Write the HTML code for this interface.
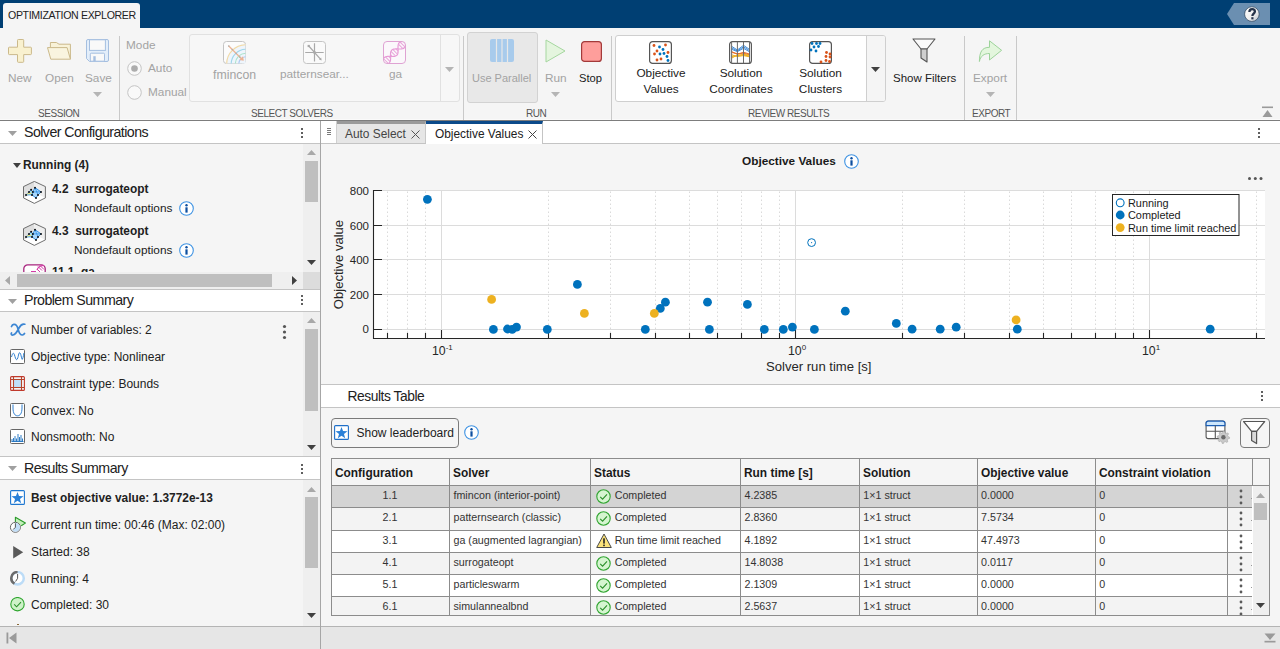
<!DOCTYPE html>
<html><head><meta charset="utf-8">
<style>
*{box-sizing:border-box}
html,body{margin:0;padding:0}
body{width:1280px;height:649px;overflow:hidden;position:relative;background:#f5f5f5;font-family:"Liberation Sans",sans-serif;color:#212121}
.a{position:absolute}
.t{position:absolute;white-space:nowrap;line-height:1}
.dis{color:#a3a3a3}
.sec{font-size:10px;color:#555;letter-spacing:-0.45px}
.lbl{font-size:11.8px}
.sep{position:absolute;width:1px;background:#c9c9c9;top:36px;height:84px}
.hdr{position:absolute;background:#fff;border-bottom:1px solid #c4c4c4}
.kb{position:absolute;width:3px}
.kb i{display:block;width:2.6px;height:2.6px;background:#5a5a5a;margin-bottom:1.6px;border-radius:0.5px}
.vs{position:absolute;background:#efefef}
.thumb{position:absolute;background:#bfbfbf}
.ps{position:absolute;font-size:12px;left:31px;line-height:1}
</style></head>
<body>
<!-- top bar -->
<div class="a" style="left:0;top:0;width:1280px;height:28px;background:#003f73"></div>
<div class="a" style="left:3px;top:3px;width:137px;height:25px;background:#f5f5f5;border-radius:3px 3px 0 0"></div>
<div class="t" style="left:8px;top:10px;font-size:10.6px;letter-spacing:-0.35px;color:#222">OPTIMIZATION EXPLORER</div>
<!-- help -->
<svg class="a" style="left:1226px;top:3px" width="46" height="23" viewBox="0 0 46 23">
<defs><linearGradient id="hg" x1="0" y1="0" x2="1" y2="1"><stop offset="0" stop-color="#ffffff"/><stop offset=".55" stop-color="#f0f0f0"/><stop offset="1" stop-color="#b9c2cc"/></linearGradient></defs>
<path d="M8 0H44V22H8L1 11Z" fill="#6b8fb1"/>
<circle cx="25.9" cy="11.1" r="7.3" fill="url(#hg)" stroke="#2f435a" stroke-width=".7"/>
<path d="M23.4 8.9C23.4 6.9 24.6 6.1 26.1 6.1C27.7 6.1 28.9 7.1 28.9 8.5C28.9 10.5 26.4 10.8 26.4 12.9" fill="none" stroke="#26334a" stroke-width="2.3"/>
<rect x="25.3" y="14.2" width="2.2" height="2.2" fill="#26334a"/>
</svg>

<!-- toolstrip -->
<div class="a" style="left:0;top:119px;width:1280px;height:1px;background:#fafafa"></div>
<div class="a" style="left:0;top:120px;width:1280px;height:1px;background:#7d7d7d"></div>

<!-- SESSION -->
<svg class="a" style="left:8px;top:39px" width="24" height="24" viewBox="0 0 24 24"><path d="M9.5 1.3Q9.5 .5 10.3 .5H14.9Q15.7 .5 15.7 1.3V8.2H22.6Q23.4 8.2 23.4 9V14.8Q23.4 15.6 22.6 15.6H15.7V22.5Q15.7 23.3 14.9 23.3H10.3Q9.5 23.3 9.5 22.5V15.6H1.3Q.5 15.6 .5 14.8V9Q.5 8.2 1.3 8.2H9.5Z" fill="#f9f1cf" stroke="#cbb98a" stroke-width="1"/></svg>
<svg class="a" style="left:47px;top:42px" width="25" height="19" viewBox="0 0 25 19"><path d="M3.4 5.6V.5H9.4L12 2.2H23.4V17.2" fill="#f8f2d8" stroke="#cbb98a" stroke-width="1" stroke-linejoin="round"/><path d="M.5 5.6H20.1L23.4 17.2H3.8Z" fill="#f9f4df" stroke="#cbb98a" stroke-width="1" stroke-linejoin="round"/></svg>
<svg class="a" style="left:86px;top:39px" width="24" height="24" viewBox="0 0 24 24"><path d="M2 .5H21Q22.5 .5 22.5 2V21Q22.5 22.5 21 22.5H3.5L.5 19.5V2Q.5 .5 2 .5Z" fill="#e3eefa" stroke="#a5bfe0" stroke-width="1"/><rect x="3.5" y=".8" width="15.9" height="10.6" fill="#f9f9f9" stroke="#a5bfe0" stroke-width="1"/><rect x="4.3" y="14.2" width="14.2" height="8" rx="1" fill="#f9f9f9" stroke="#a5bfe0" stroke-width="1"/><rect x="7.3" y="17.2" width="2.4" height="5" fill="#a5bfe0"/></svg>
<div class="t lbl dis" style="left:8px;top:73px">New</div>
<div class="t lbl dis" style="left:45px;top:73px">Open</div>
<div class="t lbl dis" style="left:85px;top:73px">Save</div>
<svg class="a" style="left:93px;top:92px" width="9" height="5"><path d="M0 0h9L4.5 5Z" fill="#b5b5b5"/></svg>
<div class="t sec" style="left:38px;top:109px">SESSION</div>
<div class="sep" style="left:119px"></div>

<!-- Mode -->
<div class="t lbl dis" style="left:126px;top:40px">Mode</div>
<svg class="a" style="left:127px;top:61px" width="15" height="15"><circle cx="7.5" cy="7.5" r="6.8" fill="#f9f9f9" stroke="#c4c4c4"/><circle cx="7.5" cy="7.5" r="3.3" fill="#acacac"/></svg>
<div class="t lbl dis" style="left:148px;top:63px">Auto</div>
<svg class="a" style="left:127px;top:85px" width="15" height="15"><circle cx="7.5" cy="7.5" r="6.8" fill="#f9f9f9" stroke="#c4c4c4"/></svg>
<div class="t lbl dis" style="left:148px;top:87px">Manual</div>

<!-- select solvers -->
<div class="a" style="left:189px;top:34px;width:271px;height:68px;background:#f7f7f7;border:1px solid #e1e1e1;border-radius:3px"></div>
<div class="a" style="left:440px;top:35px;width:1px;height:66px;background:#e1e1e1"></div>
<svg class="a" style="left:445px;top:67px" width="9" height="5"><path d="M0 0h9L4.5 5Z" fill="#b5b5b5"/></svg>
<svg class="a" style="left:223px;top:41px" width="23" height="23" viewBox="0 0 23 23">
<rect x=".5" y=".5" width="22" height="22" rx="3" fill="#fcfcfc" stroke="#c4c4c4"/>
<path d="M3 22.5A19.5 19.5 0 0 1 22.5 3V22.5Z" fill="#eef5fc"/>
<path d="M3.7 22.5A19.3 19.3 0 0 1 22.5 3.7" fill="none" stroke="#f4d9a0" stroke-width="1.1"/><path d="M8.2 22.5A14.8 14.8 0 0 1 22.5 8.2" fill="none" stroke="#9fd6ea" stroke-width="1.1"/><path d="M12.3 22.5A10.7 10.7 0 0 1 22.5 12.3" fill="none" stroke="#a8e2c8" stroke-width="1.1"/><path d="M15.8 22.5A7.2 7.2 0 0 1 22.5 15.8" fill="none" stroke="#a9c8f2" stroke-width="1.1"/>
<path d="M5.5 4.8L19 18.2" stroke="#edb393" stroke-width="1.3"/>
<path d="M20.8 19.8L20 15.3L16.3 19Z" fill="#edb393"/>
<g fill="#b0b0b0"><circle cx="5.7" cy="5" r=".8"/><circle cx="9.3" cy="8.6" r=".8"/><circle cx="13.2" cy="12.5" r=".8"/><circle cx="16.8" cy="16.1" r=".8"/></g>
</svg>
<svg class="a" style="left:303px;top:41px" width="23" height="23" viewBox="0 0 23 23"><rect x=".5" y=".5" width="22" height="22" rx="3" fill="#fafafa" stroke="#c4c4c4"/><path d="M11.5 2.2V20.5M2.2 11.5H20.7M5.8 5L17.9 18.6" stroke="#a9a9a9" stroke-width="1.2"/><rect x="4.6" y="3.9" width="2.2" height="2.2" fill="#a9a9a9"/><path d="M18.6 19.4L16 18.6L18.2 16.6Z" fill="#a9a9a9"/><circle cx="11.5" cy="11.5" r="1.4" fill="#a9a9a9"/></svg>
<svg class="a" style="left:383px;top:41px" width="23" height="23" viewBox="0 0 23 23">
<defs><clipPath id="gac"><rect x="1" y="1" width="21" height="21" rx="3"/></clipPath></defs>
<rect x=".5" y=".5" width="22" height="22" rx="3.5" fill="#fbf8fb" stroke="#dfa3d3" stroke-width="1"/>
<g clip-path="url(#gac)"><g transform="translate(11.3 11.7) rotate(-45)">
<path d="M-18.00 -2.10 L-17.50 -1.64 L-17.00 -1.15 L-16.50 -0.64 L-16.00 -0.11 L-15.50 0.43 L-15.00 0.95 L-14.50 1.45 L-14.00 1.92 L-13.50 2.35 L-13.00 2.73 L-12.50 3.04 L-12.00 3.29 L-11.50 3.47 L-11.00 3.57 L-10.50 3.60 L-10.00 3.54 L-9.50 3.41 L-9.00 3.20 L-8.50 2.92 L-8.00 2.58 L-7.50 2.18 L-7.00 1.74 L-6.50 1.25 L-6.00 0.74 L-5.50 0.21 L-5.00 -0.32 L-4.50 -0.85 L-4.00 -1.35 L-3.50 -1.83 L-3.00 -2.27 L-2.50 -2.66 L-2.00 -2.99 L-1.50 -3.25 L-1.00 -3.44 L-0.50 -3.56 L0.00 -3.60 L0.50 -3.56 L1.00 -3.44 L1.50 -3.25 L2.00 -2.99 L2.50 -2.66 L3.00 -2.27 L3.50 -1.83 L4.00 -1.35 L4.50 -0.85 L5.00 -0.32 L5.50 0.21 L6.00 0.74 L6.50 1.25 L7.00 1.74 L7.50 2.18 L8.00 2.58 L8.50 2.92 L9.00 3.20 L9.50 3.41 L10.00 3.54 L10.50 3.60 L11.00 3.57 L11.50 3.47 L12.00 3.29 L12.50 3.04 L13.00 2.73 L13.50 2.35 L14.00 1.92 L14.50 1.45 L15.00 0.95 L15.50 0.43 L16.00 -0.11 L16.50 -0.64 L17.00 -1.15 L17.50 -1.64 L18.00 -2.10M-18.00 2.10 L-17.50 1.64 L-17.00 1.15 L-16.50 0.64 L-16.00 0.11 L-15.50 -0.43 L-15.00 -0.95 L-14.50 -1.45 L-14.00 -1.92 L-13.50 -2.35 L-13.00 -2.73 L-12.50 -3.04 L-12.00 -3.29 L-11.50 -3.47 L-11.00 -3.57 L-10.50 -3.60 L-10.00 -3.54 L-9.50 -3.41 L-9.00 -3.20 L-8.50 -2.92 L-8.00 -2.58 L-7.50 -2.18 L-7.00 -1.74 L-6.50 -1.25 L-6.00 -0.74 L-5.50 -0.21 L-5.00 0.32 L-4.50 0.85 L-4.00 1.35 L-3.50 1.83 L-3.00 2.27 L-2.50 2.66 L-2.00 2.99 L-1.50 3.25 L-1.00 3.44 L-0.50 3.56 L0.00 3.60 L0.50 3.56 L1.00 3.44 L1.50 3.25 L2.00 2.99 L2.50 2.66 L3.00 2.27 L3.50 1.83 L4.00 1.35 L4.50 0.85 L5.00 0.32 L5.50 -0.21 L6.00 -0.74 L6.50 -1.25 L7.00 -1.74 L7.50 -2.18 L8.00 -2.58 L8.50 -2.92 L9.00 -3.20 L9.50 -3.41 L10.00 -3.54 L10.50 -3.60 L11.00 -3.57 L11.50 -3.47 L12.00 -3.29 L12.50 -3.04 L13.00 -2.73 L13.50 -2.35 L14.00 -1.92 L14.50 -1.45 L15.00 -0.95 L15.50 -0.43 L16.00 0.11 L16.50 0.64 L17.00 1.15 L17.50 1.64 L18.00 2.10" fill="none" stroke="#e79ad6" stroke-width="1.2"/>
<path d="M-14.40 -1.55V1.55M-11.80 -3.37V3.37M-9.20 -3.29V3.29M-6.60 -1.35V1.35M-4.00 -1.35V1.35M-1.40 -3.29V3.29M1.20 -3.37V3.37M3.80 -1.55V1.55M9.00 -3.20V3.20M11.60 -3.44V3.44M14.20 -1.74V1.74" stroke="#e8a6da" stroke-width="1"/>
</g></g>
</svg>
<div class="t lbl dis" style="left:213px;top:68.5px;font-size:12.3px">fmincon</div>
<div class="t lbl dis" style="left:280px;top:68.5px">patternsear...</div>
<div class="t lbl dis" style="left:389px;top:68.5px">ga</div>
<div class="t sec" style="left:251px;top:109px">SELECT SOLVERS</div>
<div class="sep" style="left:463px"></div>

<!-- RUN -->
<div class="a" style="left:467px;top:32px;width:71px;height:71px;background:#e8e8e8;border:1px solid #d2d2d2;border-radius:3px"></div>
<svg class="a" style="left:490px;top:39px" width="24" height="23" viewBox="0 0 24 23">
<rect x="0" y="0" width="24" height="23" rx="2" fill="#a8cbec"/>
<path d="M6.5 0v23M12 0v23M17.5 0v23" stroke="#e8e8e8" stroke-width="1.2"/>
</svg>
<svg class="a" style="left:545px;top:39px" width="21" height="24" viewBox="0 0 21 24">
<path d="M1 1L20 12L1 23Z" fill="#e4f5de" stroke="#a5d79f" stroke-width="1" stroke-linejoin="round"/>
</svg>
<svg class="a" style="left:581px;top:41px" width="21" height="21" viewBox="0 0 21 21">
<rect x=".6" y=".6" width="19.8" height="19.8" rx="3" fill="#fe9e9b" stroke="#a33a3a" stroke-width="1.2"/>
</svg>
<div class="t lbl dis" style="left:472px;top:73px;font-size:11px">Use Parallel</div>
<div class="t lbl dis" style="left:545px;top:73px">Run</div>
<svg class="a" style="left:551px;top:92px" width="9" height="5"><path d="M0 0h9L4.5 5Z" fill="#b5b5b5"/></svg>
<div class="t lbl" style="left:579px;top:73px;font-size:11.2px;color:#1a1a1a">Stop</div>
<div class="t sec" style="left:526px;top:109px">RUN</div>
<div class="sep" style="left:611px"></div>

<!-- REVIEW RESULTS -->
<div class="a" style="left:615px;top:35px;width:271px;height:67px;background:#fff;border:1px solid #cfcfcf;border-radius:3px"></div>
<div class="a" style="left:866px;top:36px;width:19px;height:65px;background:#f5f5f5;border-left:1px solid #cfcfcf;border-radius:0 2px 2px 0"></div>
<svg class="a" style="left:871px;top:67px" width="9" height="5"><path d="M0 0h9L4.5 5Z" fill="#404040"/></svg>
<svg class="a" style="left:649px;top:41px" width="23" height="23" viewBox="0 0 23 23">
<rect x=".6" y=".6" width="21.8" height="21.8" rx="3" fill="#fff" stroke="#555" stroke-width="1.2"/>
<g fill="#d95319"><circle cx="5" cy="4.5" r="1.4"/><circle cx="16.5" cy="4" r="1.4"/><circle cx="8" cy="10" r="1.4"/><circle cx="5.5" cy="13" r="1.4"/><circle cx="19" cy="11.5" r="1.4"/><circle cx="12" cy="18" r="1.4"/><circle cx="8" cy="19" r="1.4"/></g>
<g fill="#0072bd"><circle cx="10.5" cy="6" r="1.4"/><circle cx="14" cy="8.5" r="1.4"/><circle cx="11" cy="13" r="1.4"/><circle cx="15" cy="12.5" r="1.4"/><circle cx="18" cy="15.5" r="1.4"/><circle cx="19" cy="19.5" r="1.4"/></g>
</svg>
<svg class="a" style="left:729px;top:41px" width="23" height="23" viewBox="0 0 23 23">
<rect x=".6" y=".6" width="21.8" height="21.8" rx="3" fill="#fff" stroke="#5a5a5a" stroke-width="1.2"/>
<path d="M2.6 5.3 L8.4 9 L14.5 4.3 L20.5 8.4M2.6 6.8 L8.4 10 L14.5 5.8 L20.5 9.6M2.6 8.3 L8.4 10.6 L14.5 7.3 L20.5 10.8" fill="none" stroke="#2b7fd4" stroke-width=".9"/>
<path d="M2.6 10.5 L8.4 13.4 L14.5 11.3 L20.5 13M2.6 11.5 L8.4 12.6 L14.5 12.2 L20.5 13.8" fill="none" stroke="#e8702a" stroke-width="1"/>
<path d="M2.6 17.2 L8.4 14 L14.5 14 L20.5 15M2.6 15.5 L8.4 14.8 L14.5 13.3 L20.5 14.2M2.6 13.8 L8.4 15.5 L14.5 14.6 L20.5 15.8" fill="none" stroke="#f0b020" stroke-width="1"/>
<path d="M2.6 .8v21.4M8.4 .8v21.4M14.5 .8v21.4M20.5 .8v21.4" stroke="#6a6a6a" stroke-width="1"/>
</svg>
<svg class="a" style="left:809px;top:41px" width="23" height="23" viewBox="0 0 23 23">
<rect x=".6" y=".6" width="21.8" height="21.8" rx="3" fill="#fff" stroke="#555" stroke-width="1.2"/>
<g fill="#0072bd"><circle cx="3" cy="2.5" r="1.4"/><circle cx="7.5" cy="2.5" r="1.4"/><circle cx="11" cy="2.5" r="1.4"/><circle cx="5" cy="6" r="1.4"/><circle cx="9.5" cy="5.5" r="1.4"/><circle cx="2" cy="9" r="1.4"/><circle cx="7" cy="10" r="1.4"/></g>
<g fill="#d95319"><circle cx="17.5" cy="11.5" r="1.4"/><circle cx="21" cy="13" r="1.4"/><circle cx="17" cy="15.5" r="1.4"/><circle cx="21" cy="16" r="1.4"/><circle cx="17" cy="19.5" r="1.4"/><circle cx="12" cy="21" r="1.4"/><circle cx="20.5" cy="20.5" r="1.4"/></g>
</svg>
<div class="t lbl" style="left:636px;top:65px;line-height:16px;text-align:center;width:50px">Objective<br>Values</div>
<div class="t lbl" style="left:709px;top:65px;line-height:16px;text-align:center;width:64px">Solution<br>Coordinates</div>
<div class="t lbl" style="left:797px;top:65px;line-height:16px;text-align:center;width:47px">Solution<br>Clusters</div>
<div class="t sec" style="left:748px;top:109px">REVIEW RESULTS</div>

<!-- Show Filters -->
<svg class="a" style="left:912px;top:38px" width="24" height="25" viewBox="0 0 24 25">
<path d="M1 1H23L15 11H9Z" fill="#fafafa" stroke="#555" stroke-width="1.1" stroke-linejoin="round"/>
<path d="M9 11H15V24L9 20Z" fill="#cfcfcf" stroke="#555" stroke-width="1.1" stroke-linejoin="round"/>
</svg>
<div class="t lbl" style="left:893px;top:73px;font-size:11.5px">Show Filters</div>
<div class="sep" style="left:964px"></div>

<!-- EXPORT -->
<svg class="a" style="left:978px;top:40px" width="25" height="22" viewBox="0 0 25 22">
<path d="M11.5 7.3V0.8L23.6 10.3L11.5 20V13.5C6 13.5 2.5 16 1.4 21.5C1.4 12 4 7.3 11.5 7.3Z" fill="#e3f6dd" stroke="#9dd39a" stroke-width="1" stroke-linejoin="miter"/>
</svg>
<div class="t lbl dis" style="left:973px;top:73px">Export</div>
<svg class="a" style="left:986px;top:92px" width="9" height="5"><path d="M0 0h9L4.5 5Z" fill="#b5b5b5"/></svg>
<div class="t sec" style="left:972px;top:109px">EXPORT</div>
<div class="sep" style="left:1016px"></div>
<!-- collapse -->
<svg class="a" style="left:1262px;top:106px" width="12" height="12" viewBox="0 0 12 12">
<rect x="0" y="0.5" width="11" height="1.6" fill="#9a9a9a"/><path d="M0.5 11H10.5L5.5 4Z" fill="#9a9a9a"/>
</svg>

<!--LEFT-->
<div class="a" style="left:320px;top:121px;width:1px;height:528px;background:#a6a6a6"></div>
<!-- Solver Configurations -->
<div class="hdr" style="left:0;top:121px;width:320px;height:23px"></div>
<svg class="a" style="left:8px;top:131px" width="9" height="5"><path d="M0 0h9L4.5 5Z" fill="#a0a0a0"/></svg>
<div class="t" style="left:24px;top:125.3px;font-size:14.2px;letter-spacing:-0.55px">Solver Configurations</div>
<svg class="a" style="left:301px;top:128px" width="2" height="10"><rect y="0" width="2" height="2" fill="#5f5f5f"/><rect y="4" width="2" height="2" fill="#5f5f5f"/><rect y="8" width="2" height="2" fill="#5f5f5f"/></svg>
<div class="vs" style="left:303px;top:144px;width:17px;height:128px"></div>
<svg class="a" style="left:307px;top:150px" width="9" height="5"><path d="M0 5h9L4.5 0Z" fill="#a8a8a8"/></svg>
<div class="thumb" style="left:305px;top:161px;width:13px;height:41px"></div>
<svg class="a" style="left:307px;top:260px" width="9" height="5"><path d="M0 0h9L4.5 5Z" fill="#404040"/></svg>
<svg class="a" style="left:13px;top:163px" width="8" height="5"><path d="M0 0h8L4 5Z" fill="#404040"/></svg>
<div class="t" style="left:23px;top:160px;font-size:11.9px;font-weight:bold">Running (4)</div>
<svg class="a" style="left:23px;top:181px" width="23" height="23" viewBox="0 0 23 23">
<path d="M.5 5.6L11.3 .4V11.5L.5 16.9Z" fill="#dedede"/><path d="M11.3 .4L22.4 5.6V16.9L11.3 11.5Z" fill="#eeeeee"/><path d="M.5 16.9L11.3 11.5L22.4 16.9L11.3 22.4Z" fill="#fff"/>
<path d="M11.3 .4L22.4 5.6V16.9L11.3 22.4L.5 16.9V5.6Z" fill="none" stroke="#5f5f5f" stroke-width=".9"/>
<path d="M12 6.7L18 10.9L15 13.9L13 16.9L9 13.9L9.9 10.9Z" fill="#a9d6fa" stroke="#1e88e5" stroke-width=".9"/>
<path d="M12 6.7L15 13.9M9.9 10.9L18 10.9" stroke="#1e88e5" stroke-width=".7"/>
<path d="M3 13.9L6 10.9L8.1 8.8L9.9 10.9L9 13.9Z" fill="#9fd8f0" stroke="#1e88e5" stroke-width=".7"/>
<path d="M4 13L8.5 12.3" stroke="#f5e36a" stroke-width="1.1"/>
<g fill="#111"><circle cx="3" cy="13.9" r="1"/><circle cx="6" cy="10.9" r="1"/><circle cx="8.1" cy="8.8" r="1"/><circle cx="12" cy="6.7" r="1"/><circle cx="18" cy="10.9" r="1"/><circle cx="15" cy="13.9" r="1"/><circle cx="13" cy="16.9" r="1"/><circle cx="9" cy="13.9" r="1"/><circle cx="9.9" cy="10.9" r="1"/></g>
</svg>
<div class="t" style="left:52px;top:183.5px;font-size:11.9px;font-weight:bold">4.2&nbsp; surrogateopt</div>
<div class="t" style="left:74px;top:203px;font-size:11.8px">Nondefault options</div>
<svg class="a" style="left:179px;top:201px" width="15" height="15" viewBox="0 0 15 15"><circle cx="7.5" cy="7.5" r="6.8" fill="#fff" stroke="#3f93e3" stroke-width="1.1"/><circle cx="7.5" cy="4.2" r="1.2" fill="#0d4fa0"/><rect x="6.4" y="6.3" width="2.2" height="5.3" fill="#0d4fa0"/></svg>
<svg class="a" style="left:23px;top:223px" width="23" height="23" viewBox="0 0 23 23">
<path d="M.5 5.6L11.3 .4V11.5L.5 16.9Z" fill="#dedede"/><path d="M11.3 .4L22.4 5.6V16.9L11.3 11.5Z" fill="#eeeeee"/><path d="M.5 16.9L11.3 11.5L22.4 16.9L11.3 22.4Z" fill="#fff"/>
<path d="M11.3 .4L22.4 5.6V16.9L11.3 22.4L.5 16.9V5.6Z" fill="none" stroke="#5f5f5f" stroke-width=".9"/>
<path d="M12 6.7L18 10.9L15 13.9L13 16.9L9 13.9L9.9 10.9Z" fill="#a9d6fa" stroke="#1e88e5" stroke-width=".9"/>
<path d="M12 6.7L15 13.9M9.9 10.9L18 10.9" stroke="#1e88e5" stroke-width=".7"/>
<path d="M3 13.9L6 10.9L8.1 8.8L9.9 10.9L9 13.9Z" fill="#9fd8f0" stroke="#1e88e5" stroke-width=".7"/>
<path d="M4 13L8.5 12.3" stroke="#f5e36a" stroke-width="1.1"/>
<g fill="#111"><circle cx="3" cy="13.9" r="1"/><circle cx="6" cy="10.9" r="1"/><circle cx="8.1" cy="8.8" r="1"/><circle cx="12" cy="6.7" r="1"/><circle cx="18" cy="10.9" r="1"/><circle cx="15" cy="13.9" r="1"/><circle cx="13" cy="16.9" r="1"/><circle cx="9" cy="13.9" r="1"/><circle cx="9.9" cy="10.9" r="1"/></g>
</svg>
<div class="t" style="left:52px;top:226px;font-size:11.9px;font-weight:bold">4.3&nbsp; surrogateopt</div>
<div class="t" style="left:74px;top:245px;font-size:11.8px">Nondefault options</div>
<svg class="a" style="left:179px;top:243px" width="15" height="15" viewBox="0 0 15 15"><circle cx="7.5" cy="7.5" r="6.8" fill="#fff" stroke="#3f93e3" stroke-width="1.1"/><circle cx="7.5" cy="4.2" r="1.2" fill="#0d4fa0"/><rect x="6.4" y="6.3" width="2.2" height="5.3" fill="#0d4fa0"/></svg>
<div class="a" style="left:0;top:262px;width:303px;height:10px;overflow:hidden">
<svg class="a" style="left:23px;top:2px" width="23" height="23" viewBox="0 0 23 23"><rect x=".8" y=".8" width="21.4" height="21.4" rx="4" fill="#fff" stroke="#a8247e" stroke-width="1.3"/><path d="M8 7.5h5M14 6C15 3 18 1.5 21 1.5" fill="none" stroke="#d43aa6" stroke-width="1.2"/><path d="M15 2.5L19 6.5M17 1.5L21 5.5M14 5L17 8" stroke="#d43aa6" stroke-width="1"/></svg>
<div class="t" style="left:52px;top:5px;font-size:11.9px;font-weight:bold">11.1&nbsp; ga</div>
</div>
<!-- hscroll -->
<div class="a" style="left:0;top:272px;width:303px;height:17px;background:#efefef"></div>
<svg class="a" style="left:5px;top:276px" width="5" height="9"><path d="M5 0v9L0 4.5Z" fill="#a8a8a8"/></svg>
<div class="thumb" style="left:17px;top:274px;width:255px;height:13px"></div>
<svg class="a" style="left:292px;top:276px" width="5" height="9"><path d="M0 0v9L5 4.5Z" fill="#404040"/></svg>
<div class="a" style="left:303px;top:272px;width:17px;height:17px;background:#dcdcdc"></div>
<div class="a" style="left:0;top:289px;width:320px;height:1px;background:#c4c4c4"></div>

<!-- Problem Summary -->
<div class="hdr" style="left:0;top:290px;width:320px;height:22px"></div>
<svg class="a" style="left:8px;top:299px" width="9" height="5"><path d="M0 0h9L4.5 5Z" fill="#a0a0a0"/></svg>
<div class="t" style="left:24px;top:293.3px;font-size:14.2px;letter-spacing:-0.55px">Problem Summary</div>
<svg class="a" style="left:301px;top:295px" width="2" height="10"><rect y="0" width="2" height="2" fill="#5f5f5f"/><rect y="4" width="2" height="2" fill="#5f5f5f"/><rect y="8" width="2" height="2" fill="#5f5f5f"/></svg>
<div class="vs" style="left:303px;top:312px;width:17px;height:144px"></div>
<svg class="a" style="left:307px;top:318px" width="9" height="5"><path d="M0 5h9L4.5 0Z" fill="#a8a8a8"/></svg>
<div class="thumb" style="left:305px;top:329px;width:13px;height:82px"></div>
<svg class="a" style="left:307px;top:445px" width="9" height="5"><path d="M0 0h9L4.5 5Z" fill="#404040"/></svg>
<svg class="a" style="left:282px;top:324px" width="5" height="16"><circle cx="2.5" cy="2.5" r="1.6" fill="#555"/><circle cx="2.5" cy="8" r="1.6" fill="#555"/><circle cx="2.5" cy="13.5" r="1.6" fill="#555"/></svg>
<svg class="a" style="left:10px;top:323px" width="16" height="13" viewBox="0 0 16 13"><path d="M1.5 3.5C2.5 1 5 .8 6.5 2.5S8.5 9 10 10.8S13.5 12.3 14.5 10.5M14.8 1.2C12.5 .5 10.5 2 9 5S5.5 11.5 3 12C1.5 12.2 .8 11 1.5 10" fill="none" stroke="#3c86d3" stroke-width="1.7" stroke-linecap="round"/></svg>
<div class="ps" style="top:324px">Number of variables: 2</div>
<svg class="a" style="left:10px;top:349px" width="15" height="15" viewBox="0 0 15 15"><rect x=".5" y=".5" width="14" height="14" rx="1" fill="#fff" stroke="#666"/><path d="M1.5 8C2.5 4 3.5 3 4.5 6S6 12 7.3 10S8.5 2.5 10 4S11.5 12 12.5 10S13.5 5 14 4" fill="none" stroke="#2f7fd0" stroke-width="1"/></svg>
<div class="ps" style="top:351px">Objective type: Nonlinear</div>
<svg class="a" style="left:10px;top:376px" width="15" height="15" viewBox="0 0 15 15"><rect x="3.5" y="3.5" width="8" height="8" fill="#bfe0f8"/><path d="M1 3.5h13M1 11.5h13M3.5 1v13M11.5 1v13" stroke="#b5452a" stroke-width="1.1"/><rect x=".6" y=".6" width="13.8" height="13.8" rx="1" fill="none" stroke="#c0392b" stroke-width="1.1"/></svg>
<div class="ps" style="top:378px">Constraint type: Bounds</div>
<svg class="a" style="left:10px;top:403px" width="15" height="15" viewBox="0 0 15 15"><rect x=".5" y=".5" width="14" height="14" rx="1" fill="#fff" stroke="#666"/><path d="M3 1.5V5C3 10.5 5 12.8 7.5 12.8S12 10.5 12 5V1.5" fill="none" stroke="#2f7fd0" stroke-width="1"/></svg>
<div class="ps" style="top:405px">Convex: No</div>
<svg class="a" style="left:10px;top:429px" width="15" height="15" viewBox="0 0 15 15"><rect x=".5" y=".5" width="14" height="14" rx="1" fill="#fff" stroke="#666"/><path d="M2 12.5V10M3.5 12.5V9M5 12.5V7M6.5 12.5V9.5M8 12.5V5M9.5 12.5V8M11 12.5V6M12.5 12.5V9.5M1.5 12.5h12" fill="none" stroke="#1a6fc0" stroke-width=".9"/></svg>
<div class="ps" style="top:431px">Nonsmooth: No</div>
<div class="a" style="left:0;top:456px;width:320px;height:1px;background:#c4c4c4"></div>

<!-- Results Summary -->
<div class="hdr" style="left:0;top:457px;width:320px;height:23px"></div>
<svg class="a" style="left:8px;top:466px" width="9" height="5"><path d="M0 0h9L4.5 5Z" fill="#a0a0a0"/></svg>
<div class="t" style="left:24px;top:460.8px;font-size:14.2px;letter-spacing:-0.55px">Results Summary</div>
<svg class="a" style="left:301px;top:464px" width="2" height="10"><rect y="0" width="2" height="2" fill="#5f5f5f"/><rect y="4" width="2" height="2" fill="#5f5f5f"/><rect y="8" width="2" height="2" fill="#5f5f5f"/></svg>
<div class="vs" style="left:303px;top:480px;width:17px;height:146px"></div>
<svg class="a" style="left:307px;top:487px" width="9" height="5"><path d="M0 5h9L4.5 0Z" fill="#a8a8a8"/></svg>
<div class="thumb" style="left:305px;top:497px;width:13px;height:71px"></div>
<svg class="a" style="left:307px;top:613px" width="9" height="5"><path d="M0 0h9L4.5 5Z" fill="#404040"/></svg>
<svg class="a" style="left:10px;top:490px" width="15" height="15" viewBox="0 0 15 15"><rect x=".6" y=".6" width="13.8" height="13.8" rx="1" fill="#fff" stroke="#1f77d0" stroke-width="1.1"/><path d="M7.50 1.90 L9.03 6.10 L13.49 6.25 L9.97 9.00 L11.20 13.30 L7.50 10.80 L3.80 13.30 L5.03 9.00 L1.51 6.25 L5.97 6.10Z" fill="#2a80d8"/></svg>
<div class="ps" style="top:492.5px;font-weight:bold;font-size:11.9px">Best objective value: 1.3772e-13</div>
<svg class="a" style="left:9px;top:516px" width="18" height="18" viewBox="0 0 18 18"><path d="M6.4 8V1.3L16.4 7.1L12.2 9.8" fill="#c4f0bb" stroke="#2a9a2a" stroke-width="1.1" stroke-linejoin="round"/><circle cx="6.4" cy="11.3" r="5" fill="#fff" stroke="#666" stroke-width="1"/><path d="M6.4 6.8A4.5 4.5 0 1 1 3.4 14.6L6.4 11.3Z" fill="#c2def7"/><path d="M6.4 7.3v4L4.2 13.5" fill="none" stroke="#444" stroke-width=".9"/></svg>
<div class="ps" style="top:519px">Current run time: 00:46 (Max: 02:00)</div>
<svg class="a" style="left:13px;top:546px" width="11" height="13" viewBox="0 0 11 13"><path d="M.2 0L10.2 6.3L.2 12.6Z" fill="#5a5a5a"/></svg>
<div class="ps" style="top:546px">Started: 38</div>
<svg class="a" style="left:10px;top:571px" width="16" height="16" viewBox="0 0 16 16"><circle cx="7.6" cy="7.3" r="6.2" fill="#fff" stroke="#bcdcf7" stroke-width="2.5"/><path d="M7.6 1.1A6.2 6.2 0 0 0 4.5 12.7" fill="none" stroke="#6b6b6b" stroke-width="2.5"/><path d="M7.6 3v4.3L5.6 10.5" fill="none" stroke="#444" stroke-width=".9"/></svg>
<div class="ps" style="top:573px">Running: 4</div>
<svg class="a" style="left:10px;top:597px" width="15" height="15" viewBox="0 0 15 15"><circle cx="7.5" cy="7.2" r="6.7" fill="#cdf2c8" stroke="#2ea52e" stroke-width="1.1"/><path d="M4.2 7.4L6.6 9.8L11 5.2" fill="none" stroke="#2a8f2a" stroke-width="1.1"/></svg>
<div class="ps" style="top:599px">Completed: 30</div>
<div class="a" style="left:17px;top:624px;width:2px;height:1px;background:#8a6a3a"></div>

<!--RIGHT-->
<!-- tab row -->
<div class="a" style="left:321px;top:121px;width:959px;height:23px;background:#fff;border-bottom:1px solid #c4c4c4"></div>
<svg class="a" style="left:327px;top:128px" width="4" height="8"><path d="M0 .5h4M0 2.5h4M0 4.5h4M0 6.5h4" stroke="#7a7a7a" stroke-width="1"/></svg>
<div class="a" style="left:336px;top:121px;width:1px;height:22px;background:#d0d0d0"></div>
<div class="a" style="left:337px;top:121px;width:89px;height:22px;background:#e6e6e6;border-top:3px solid #9a9a9a;border-right:1px solid #c8c8c8"></div>
<div class="t" style="left:345px;top:129px;font-size:11.9px;color:#444">Auto Select</div>
<svg class="a" style="left:411px;top:130px" width="9" height="9"><path d="M.5 .5l8 8M8.5 .5l-8 8" stroke="#555" stroke-width="1"/></svg>
<div class="a" style="left:426px;top:121px;width:117px;height:23px;background:#fff;border-top:3px solid #0b4a8a;border-right:1px solid #c4c4c4"></div>
<div class="t" style="left:435px;top:129px;font-size:11.9px;color:#212121">Objective Values</div>
<svg class="a" style="left:528px;top:130px" width="9" height="9"><path d="M.5 .5l8 8M8.5 .5l-8 8" stroke="#444" stroke-width="1"/></svg>
<svg class="a" style="left:1258px;top:128px" width="2" height="10"><rect y="0" width="2" height="2" fill="#5f5f5f"/><rect y="4" width="2" height="2" fill="#5f5f5f"/><rect y="8" width="2" height="2" fill="#5f5f5f"/></svg>

<!-- chart panel -->
<div class="a" style="left:321px;top:144px;width:959px;height:241px;background:#f5f5f5;border-bottom:1px solid #c4c4c4"></div>
<svg class="a" style="left:321px;top:144px" width="959" height="240" viewBox="321 144 959 240">
<rect x="373.5" y="190.0" width="891.5" height="148.0" fill="#fff"/>
<path d="M387.5 191.5V338.5M407.5 191.5V338.5M425.5 191.5V338.5M548.5 191.5V338.5M610.5 191.5V338.5M655.5 191.5V338.5M689.5 191.5V338.5M717.5 191.5V338.5M741.5 191.5V338.5M761.5 191.5V338.5M779.5 191.5V338.5M902.5 191.5V338.5M964.5 191.5V338.5M1009.5 191.5V338.5M1043.5 191.5V338.5M1071.5 191.5V338.5M1095.5 191.5V338.5M1115.5 191.5V338.5M1133.5 191.5V338.5M1256.5 191.5V338.5" stroke="#dadada" stroke-width="1" stroke-dasharray="1.5 2.5"/>
<path d="M441.5 190.5V338.5M795.5 190.5V338.5M1149.5 190.5V338.5M373.5 329.5H1265.0M373.5 294.5H1265.0M373.5 259.5H1265.0M373.5 225.5H1265.0M373.5 190.5H1265.0" stroke="#dcdcdc" stroke-width="1"/>
<path d="M373.5 190.0V338.5H1265.0" fill="none" stroke="#262626" stroke-width="1.1"/>
<path d="M373.5 329.5h8.5M373.5 294.5h8.5M373.5 259.5h8.5M373.5 225.5h8.5M373.5 190.5h8.5M441.5 338.5v-8.5M795.5 338.5v-8.5M1149.5 338.5v-8.5M387.5 338.5v-5.5M407.5 338.5v-5.5M425.5 338.5v-5.5M548.5 338.5v-5.5M610.5 338.5v-5.5M655.5 338.5v-5.5M689.5 338.5v-5.5M717.5 338.5v-5.5M741.5 338.5v-5.5M761.5 338.5v-5.5M779.5 338.5v-5.5M902.5 338.5v-5.5M964.5 338.5v-5.5M1009.5 338.5v-5.5M1043.5 338.5v-5.5M1071.5 338.5v-5.5M1095.5 338.5v-5.5M1115.5 338.5v-5.5M1133.5 338.5v-5.5M1256.5 338.5v-5.5" stroke="#262626" stroke-width="1.1"/>
<g fill="#0072bd"><circle cx="427.4" cy="199.3" r="4.4"/><circle cx="493.4" cy="329.4" r="4.4"/><circle cx="507.5" cy="329" r="4.4"/><circle cx="512.2" cy="329.4" r="4.4"/><circle cx="516.5" cy="327.1" r="4.4"/><circle cx="547.3" cy="329.4" r="4.4"/><circle cx="577.4" cy="284.4" r="4.4"/><circle cx="645.3" cy="329.4" r="4.4"/><circle cx="660.3" cy="308.4" r="4.4"/><circle cx="665.4" cy="302.2" r="4.4"/><circle cx="707.5" cy="302.2" r="4.4"/><circle cx="709.4" cy="329.4" r="4.4"/><circle cx="747.4" cy="304.4" r="4.4"/><circle cx="764.3" cy="329.4" r="4.4"/><circle cx="783.3" cy="329.4" r="4.4"/><circle cx="792.4" cy="327.1" r="4.4"/><circle cx="814.4" cy="329.4" r="4.4"/><circle cx="845.3" cy="311.2" r="4.4"/><circle cx="896.3" cy="323.4" r="4.4"/><circle cx="912.1" cy="329.2" r="4.4"/><circle cx="940.2" cy="329.2" r="4.4"/><circle cx="956.2" cy="327.2" r="4.4"/><circle cx="1017.3" cy="329.2" r="4.4"/><circle cx="1210.2" cy="329.2" r="4.4"/></g>
<g fill="#edb120"><circle cx="491.6" cy="299.4" r="4.4"/><circle cx="584.4" cy="313.4" r="4.4"/><circle cx="654.3" cy="313.4" r="4.4"/><circle cx="1016.1" cy="319.9" r="4.4"/></g>
<circle cx="811.6" cy="242.6" r="3.9" fill="#fff" stroke="#0072bd" stroke-width="1"/><circle cx="811.6" cy="242.6" r=".6" fill="#0072bd"/>
<rect x="1112.5" y="194.5" width="126.5" height="41" fill="#fff" stroke="#262626" stroke-width="1"/>
<circle cx="1120.2" cy="202.8" r="3.9" fill="#fff" stroke="#0072bd" stroke-width="1.1"/>
<circle cx="1120.2" cy="215" r="4.4" fill="#0072bd"/>
<circle cx="1120.2" cy="227.6" r="4.4" fill="#edb120"/>
</svg>

<div class="t" style="left:742px;top:155.5px;font-size:11.8px;font-weight:bold;color:#1a1a1a">Objective Values</div>
<svg class="a" style="left:844px;top:154px" width="15" height="15" viewBox="0 0 15 15"><circle cx="7.5" cy="7.5" r="6.8" fill="#fff" stroke="#3f93e3" stroke-width="1.1"/><circle cx="7.5" cy="4.2" r="1.2" fill="#0d4fa0"/><rect x="6.4" y="6.3" width="2.2" height="5.3" fill="#0d4fa0"/></svg>
<svg class="a" style="left:1247px;top:176px" width="16" height="5"><circle cx="2.5" cy="2.5" r="1.5" fill="#555"/><circle cx="8.3" cy="2.5" r="1.5" fill="#555"/><circle cx="14" cy="2.5" r="1.5" fill="#555"/></svg>
<div class="t" style="left:340px;top:186px;width:29px;text-align:right;font-size:11.5px;color:#262626">800</div>
<div class="t" style="left:340px;top:220.5px;width:29px;text-align:right;font-size:11.5px;color:#262626">600</div>
<div class="t" style="left:340px;top:255px;width:29px;text-align:right;font-size:11.5px;color:#262626">400</div>
<div class="t" style="left:340px;top:289.5px;width:29px;text-align:right;font-size:11.5px;color:#262626">200</div>
<div class="t" style="left:340px;top:324px;width:29px;text-align:right;font-size:11.5px;color:#262626">0</div>
<div class="t" style="left:281px;top:257.7px;width:115px;text-align:center;font-size:13.05px;color:#262626;transform:rotate(-90deg)">Objective value</div>
<div class="t" style="left:432px;top:345px;font-size:12.3px;color:#262626">10<span style="font-size:8px;position:relative;top:-5.5px;">-1</span></div>
<div class="t" style="left:788px;top:345px;font-size:12.3px;color:#262626">10<span style="font-size:8px;position:relative;top:-5.5px;">0</span></div>
<div class="t" style="left:1142px;top:345px;font-size:12.3px;color:#262626">10<span style="font-size:8px;position:relative;top:-5.5px;">1</span></div>
<div class="t" style="left:766px;top:360.4px;font-size:13.1px;color:#262626">Solver run time [s]</div>
<div class="t" style="left:1128px;top:197.5px;font-size:10.9px;color:#1a1a1a">Running</div>
<div class="t" style="left:1128px;top:209.7px;font-size:10.9px;color:#1a1a1a">Completed</div>
<div class="t" style="left:1128px;top:222.5px;font-size:10.9px;color:#1a1a1a">Run time limit reached</div>

<!--TABLE-->
<!-- results table header -->
<div class="a" style="left:321px;top:385px;width:959px;height:23px;background:#fff;border-bottom:1px solid #c4c4c4"></div>
<div class="t" style="left:347.5px;top:389.5px;font-size:13.8px;letter-spacing:-0.45px;color:#212121">Results Table</div>
<svg class="a" style="left:1261px;top:391px" width="2" height="10"><rect y="0" width="2" height="2" fill="#5f5f5f"/><rect y="4" width="2" height="2" fill="#5f5f5f"/><rect y="8" width="2" height="2" fill="#5f5f5f"/></svg>
<div class="a" style="left:331px;top:418px;width:128px;height:30px;border:1px solid #7a7a7a;border-radius:4px;background:#f5f5f5"></div>
<svg class="a" style="left:334px;top:425px" width="15" height="15" viewBox="0 0 15 15"><rect x=".6" y=".6" width="13.8" height="13.8" rx="1" fill="#fff" stroke="#1f6fc8" stroke-width="1.1"/><path d="M7.50 1.90 L9.03 6.10 L13.49 6.25 L9.97 9.00 L11.20 13.30 L7.50 10.80 L3.80 13.30 L5.03 9.00 L1.51 6.25 L5.97 6.10Z" fill="#2a80d8"/></svg>
<div class="t" style="left:356.5px;top:426.5px;font-size:12px;color:#212121">Show leaderboard</div>
<svg class="a" style="left:464px;top:424.5px" width="15" height="15" viewBox="0 0 15 15"><circle cx="7.5" cy="7.5" r="6.8" fill="#fff" stroke="#3f93e3" stroke-width="1.1"/><circle cx="7.5" cy="4.2" r="1.2" fill="#0d4fa0"/><rect x="6.4" y="6.3" width="2.2" height="5.3" fill="#0d4fa0"/></svg>
<svg class="a" style="left:1205px;top:420px" width="26" height="26" viewBox="0 0 26 26"><rect x="1.1" y="1.1" width="18.8" height="17.5" rx="2.2" fill="#fff" stroke="#555" stroke-width="1.1"/><path d="M1.1 5.6V3.3A2.2 2.2 0 0 1 3.3 1.1H17.7A2.2 2.2 0 0 1 19.9 3.3V5.6Z" fill="#cde6fb" stroke="#1c5fb5" stroke-width="1.1"/><path d="M10.3 5.6v13M1.1 11.3h18.8" stroke="#555" stroke-width="1.1"/><path d="M24.60 17.30 L24.48 18.51 L22.65 19.06 L22.22 19.86 L22.78 21.68 L21.84 22.46 L20.16 21.55 L19.30 21.81 L18.40 23.50 L17.19 23.38 L16.64 21.55 L15.84 21.12 L14.02 21.68 L13.24 20.74 L14.15 19.06 L13.89 18.20 L12.20 17.30 L12.32 16.09 L14.15 15.54 L14.58 14.74 L14.02 12.92 L14.96 12.14 L16.64 13.05 L17.50 12.79 L18.40 11.10 L19.61 11.22 L20.16 13.05 L20.96 13.48 L22.78 12.92 L23.56 13.86 L22.65 15.54 L22.91 16.40Z" fill="#c9c9c9" stroke="#9a9a9a" stroke-width=".5"/><circle cx="18.4" cy="17.3" r="2.2" fill="#6a6a6a"/></svg>
<div class="a" style="left:1240px;top:418px;width:30px;height:30px;border:1px solid #7a7a7a;border-radius:4px;background:#f5f5f5"></div>
<svg class="a" style="left:1242px;top:420px" width="24" height="25" viewBox="0 0 24 25"><path d="M1.6 1.5H22.7L14.6 11.3H9.6Z" fill="#fff" stroke="#555" stroke-width="1.2" stroke-linejoin="round"/><path d="M9.6 11.3H14.6V23.6L9.6 20.4Z" fill="#d9d9d9" stroke="#555" stroke-width="1.2" stroke-linejoin="round"/></svg>
<div class="a" style="left:331px;top:458px;width:939px;height:158px;overflow:hidden;border:1px solid #8c8c8c;background:#fff">
<div class="a" style="left:0;top:0;width:939px;height:27px;background:#f5f5f5"></div>
<div class="a" style="left:0;top:26px;width:920px;height:22px;background:#d4d4d4"></div>
<div class="a" style="left:0;top:48px;width:920px;height:23px;background:#f3f3f3"></div>
<div class="a" style="left:0;top:71px;width:920px;height:22px;background:#fff"></div>
<div class="a" style="left:0;top:93px;width:920px;height:22px;background:#f3f3f3"></div>
<div class="a" style="left:0;top:115px;width:920px;height:22px;background:#fff"></div>
<div class="a" style="left:0;top:137px;width:920px;height:22px;background:#f3f3f3"></div>
<div class="a" style="left:921px;top:27px;width:17px;height:140px;background:#efefef"></div>
<div class="a" style="left:117.0px;top:0;width:1px;height:200px;background:#8c8c8c"></div>
<div class="a" style="left:258.0px;top:0;width:1px;height:200px;background:#8c8c8c"></div>
<div class="a" style="left:408.0px;top:0;width:1px;height:200px;background:#8c8c8c"></div>
<div class="a" style="left:527.0px;top:0;width:1px;height:200px;background:#8c8c8c"></div>
<div class="a" style="left:645.0px;top:0;width:1px;height:200px;background:#8c8c8c"></div>
<div class="a" style="left:763.0px;top:0;width:1px;height:200px;background:#8c8c8c"></div>
<div class="a" style="left:895.0px;top:0;width:1px;height:200px;background:#8c8c8c"></div>
<div class="a" style="left:920.0px;top:0;width:1px;height:27px;background:#8c8c8c"></div>
<div class="a" style="left:0;top:26.0px;width:939.0px;height:1px;background:#8c8c8c"></div>
<div class="a" style="left:0;top:48.0px;width:920.0px;height:1px;background:#8c8c8c"></div>
<div class="a" style="left:0;top:71.0px;width:920.0px;height:1px;background:#8c8c8c"></div>
<div class="a" style="left:0;top:93.0px;width:920.0px;height:1px;background:#8c8c8c"></div>
<div class="a" style="left:0;top:115.0px;width:920.0px;height:1px;background:#8c8c8c"></div>
<div class="a" style="left:0;top:137.0px;width:920.0px;height:1px;background:#8c8c8c"></div>
<div class="a" style="left:0;top:159.0px;width:920.0px;height:1px;background:#8c8c8c"></div>
<div class="t" style="left:3.0px;top:8.6px;font-size:11.9px;font-weight:bold;color:#1a1a1a">Configuration</div>
<div class="t" style="left:121.0px;top:8.6px;font-size:11.9px;font-weight:bold;color:#1a1a1a">Solver</div>
<div class="t" style="left:262.0px;top:8.6px;font-size:11.9px;font-weight:bold;color:#1a1a1a">Status</div>
<div class="t" style="left:412.0px;top:8.6px;font-size:11.9px;font-weight:bold;color:#1a1a1a">Run time [s]</div>
<div class="t" style="left:531.0px;top:8.6px;font-size:11.9px;font-weight:bold;color:#1a1a1a">Solution</div>
<div class="t" style="left:649.0px;top:8.6px;font-size:11.9px;font-weight:bold;color:#1a1a1a">Objective value</div>
<div class="t" style="left:767.0px;top:8.6px;font-size:11.9px;font-weight:bold;color:#1a1a1a">Constraint violation</div>
<div class="t" style="left:-1.0px;width:118.0px;text-align:center;top:30.6px;font-size:10.7px;color:#333">1.1</div>
<div class="t" style="left:121.5px;top:30.6px;font-size:10.7px;color:#333;">fmincon (interior-point)</div>
<svg class="a" style="left:264.0px;top:30.0px" width="15" height="15" viewBox="0 0 15 15"><circle cx="7.5" cy="7.5" r="6.7" fill="#d5f5d0" stroke="#31a531" stroke-width="1.1"/><path d="M4.2 7.8L6.6 10.2L11 5.4" fill="none" stroke="#2a8f2a" stroke-width="1.1"/></svg>
<div class="t" style="left:282.7px;top:30.6px;font-size:10.7px;color:#333;">Completed</div>
<div class="t" style="left:412.5px;top:30.6px;font-size:10.7px;color:#333;">4.2385</div>
<div class="t" style="left:531.3px;top:30.6px;font-size:10.7px;color:#333;">1×1 struct</div>
<div class="t" style="left:649.1px;top:30.6px;font-size:10.7px;color:#333;">0.0000</div>
<div class="t" style="left:767.3px;top:30.6px;font-size:10.7px;color:#333;">0</div>
<svg class="a" style="left:906.5px;top:29.8px" width="4" height="16"><circle cx="2" cy="2" r="1.4" fill="#5a5a5a"/><circle cx="2" cy="8" r="1.4" fill="#5a5a5a"/><circle cx="2" cy="14" r="1.4" fill="#5a5a5a"/></svg>
<div class="a" style="left:919.0px;top:39.0px;width:1px;height:1px;background:#999"></div>
<div class="t" style="left:-1.0px;width:118.0px;text-align:center;top:52.6px;font-size:10.7px;color:#333">2.1</div>
<div class="t" style="left:121.5px;top:52.6px;font-size:10.7px;color:#333;">patternsearch (classic)</div>
<svg class="a" style="left:264.0px;top:52.0px" width="15" height="15" viewBox="0 0 15 15"><circle cx="7.5" cy="7.5" r="6.7" fill="#d5f5d0" stroke="#31a531" stroke-width="1.1"/><path d="M4.2 7.8L6.6 10.2L11 5.4" fill="none" stroke="#2a8f2a" stroke-width="1.1"/></svg>
<div class="t" style="left:282.7px;top:52.6px;font-size:10.7px;color:#333;">Completed</div>
<div class="t" style="left:412.5px;top:52.6px;font-size:10.7px;color:#333;">2.8360</div>
<div class="t" style="left:531.3px;top:52.6px;font-size:10.7px;color:#333;">1×1 struct</div>
<div class="t" style="left:649.1px;top:52.6px;font-size:10.7px;color:#333;">7.5734</div>
<div class="t" style="left:767.3px;top:52.6px;font-size:10.7px;color:#333;">0</div>
<svg class="a" style="left:906.5px;top:51.8px" width="4" height="16"><circle cx="2" cy="2" r="1.4" fill="#5a5a5a"/><circle cx="2" cy="8" r="1.4" fill="#5a5a5a"/><circle cx="2" cy="14" r="1.4" fill="#5a5a5a"/></svg>
<div class="a" style="left:919.0px;top:61.0px;width:1px;height:1px;background:#999"></div>
<div class="t" style="left:-1.0px;width:118.0px;text-align:center;top:75.6px;font-size:10.7px;color:#333">3.1</div>
<div class="t" style="left:121.5px;top:75.6px;font-size:10.7px;color:#333;">ga (augmented lagrangian)</div>
<svg class="a" style="left:263.5px;top:74.0px" width="16" height="16" viewBox="0 0 16 16"><path d="M8 1L15.3 14.5H.7Z" fill="#fbe27a" stroke="#4a4a4a" stroke-width="1" stroke-linejoin="round"/><rect x="7.2" y="5.3" width="1.6" height="5.3" fill="#222"/><rect x="7.2" y="11.6" width="1.6" height="1.6" fill="#222"/></svg>
<div class="t" style="left:282.7px;top:75.6px;font-size:10.7px;color:#333;">Run time limit reached</div>
<div class="t" style="left:412.5px;top:75.6px;font-size:10.7px;color:#333;">4.1892</div>
<div class="t" style="left:531.3px;top:75.6px;font-size:10.7px;color:#333;">1×1 struct</div>
<div class="t" style="left:649.1px;top:75.6px;font-size:10.7px;color:#333;">47.4973</div>
<div class="t" style="left:767.3px;top:75.6px;font-size:10.7px;color:#333;">0</div>
<svg class="a" style="left:906.5px;top:74.8px" width="4" height="16"><circle cx="2" cy="2" r="1.4" fill="#5a5a5a"/><circle cx="2" cy="8" r="1.4" fill="#5a5a5a"/><circle cx="2" cy="14" r="1.4" fill="#5a5a5a"/></svg>
<div class="a" style="left:919.0px;top:84.0px;width:1px;height:1px;background:#999"></div>
<div class="t" style="left:-1.0px;width:118.0px;text-align:center;top:97.6px;font-size:10.7px;color:#333">4.1</div>
<div class="t" style="left:121.5px;top:97.6px;font-size:10.7px;color:#333;">surrogateopt</div>
<svg class="a" style="left:264.0px;top:97.0px" width="15" height="15" viewBox="0 0 15 15"><circle cx="7.5" cy="7.5" r="6.7" fill="#d5f5d0" stroke="#31a531" stroke-width="1.1"/><path d="M4.2 7.8L6.6 10.2L11 5.4" fill="none" stroke="#2a8f2a" stroke-width="1.1"/></svg>
<div class="t" style="left:282.7px;top:97.6px;font-size:10.7px;color:#333;">Completed</div>
<div class="t" style="left:412.5px;top:97.6px;font-size:10.7px;color:#333;">14.8038</div>
<div class="t" style="left:531.3px;top:97.6px;font-size:10.7px;color:#333;">1×1 struct</div>
<div class="t" style="left:649.1px;top:97.6px;font-size:10.7px;color:#333;">0.0117</div>
<div class="t" style="left:767.3px;top:97.6px;font-size:10.7px;color:#333;">0</div>
<svg class="a" style="left:906.5px;top:96.8px" width="4" height="16"><circle cx="2" cy="2" r="1.4" fill="#5a5a5a"/><circle cx="2" cy="8" r="1.4" fill="#5a5a5a"/><circle cx="2" cy="14" r="1.4" fill="#5a5a5a"/></svg>
<div class="a" style="left:919.0px;top:106.0px;width:1px;height:1px;background:#999"></div>
<div class="t" style="left:-1.0px;width:118.0px;text-align:center;top:119.6px;font-size:10.7px;color:#333">5.1</div>
<div class="t" style="left:121.5px;top:119.6px;font-size:10.7px;color:#333;">particleswarm</div>
<svg class="a" style="left:264.0px;top:119.0px" width="15" height="15" viewBox="0 0 15 15"><circle cx="7.5" cy="7.5" r="6.7" fill="#d5f5d0" stroke="#31a531" stroke-width="1.1"/><path d="M4.2 7.8L6.6 10.2L11 5.4" fill="none" stroke="#2a8f2a" stroke-width="1.1"/></svg>
<div class="t" style="left:282.7px;top:119.6px;font-size:10.7px;color:#333;">Completed</div>
<div class="t" style="left:412.5px;top:119.6px;font-size:10.7px;color:#333;">2.1309</div>
<div class="t" style="left:531.3px;top:119.6px;font-size:10.7px;color:#333;">1×1 struct</div>
<div class="t" style="left:649.1px;top:119.6px;font-size:10.7px;color:#333;">0.0000</div>
<div class="t" style="left:767.3px;top:119.6px;font-size:10.7px;color:#333;">0</div>
<svg class="a" style="left:906.5px;top:118.8px" width="4" height="16"><circle cx="2" cy="2" r="1.4" fill="#5a5a5a"/><circle cx="2" cy="8" r="1.4" fill="#5a5a5a"/><circle cx="2" cy="14" r="1.4" fill="#5a5a5a"/></svg>
<div class="a" style="left:919.0px;top:128.0px;width:1px;height:1px;background:#999"></div>
<div class="t" style="left:-1.0px;width:118.0px;text-align:center;top:141.6px;font-size:10.7px;color:#333">6.1</div>
<div class="t" style="left:121.5px;top:141.6px;font-size:10.7px;color:#333;">simulannealbnd</div>
<svg class="a" style="left:264.0px;top:141.0px" width="15" height="15" viewBox="0 0 15 15"><circle cx="7.5" cy="7.5" r="6.7" fill="#d5f5d0" stroke="#31a531" stroke-width="1.1"/><path d="M4.2 7.8L6.6 10.2L11 5.4" fill="none" stroke="#2a8f2a" stroke-width="1.1"/></svg>
<div class="t" style="left:282.7px;top:141.6px;font-size:10.7px;color:#333;">Completed</div>
<div class="t" style="left:412.5px;top:141.6px;font-size:10.7px;color:#333;">2.5637</div>
<div class="t" style="left:531.3px;top:141.6px;font-size:10.7px;color:#333;">1×1 struct</div>
<div class="t" style="left:649.1px;top:141.6px;font-size:10.7px;color:#333;">0.0000</div>
<div class="t" style="left:767.3px;top:141.6px;font-size:10.7px;color:#333;">0</div>
<svg class="a" style="left:906.5px;top:140.8px" width="4" height="16"><circle cx="2" cy="2" r="1.4" fill="#5a5a5a"/><circle cx="2" cy="8" r="1.4" fill="#5a5a5a"/><circle cx="2" cy="14" r="1.4" fill="#5a5a5a"/></svg>
<div class="a" style="left:919.0px;top:150.0px;width:1px;height:1px;background:#999"></div>
<svg class="a" style="left:924.0px;top:33.5px" width="9" height="5"><path d="M0 5h9L4.5 0Z" fill="#a8a8a8"/></svg>
<div class="thumb" style="left:922.0px;top:44.3px;width:13px;height:16.5px"></div>
<svg class="a" style="left:924.0px;top:144.0px" width="9" height="5"><path d="M0 0h9L4.5 5Z" fill="#404040"/></svg>
</div>
<div class="a" style="left:0;top:626px;width:1280px;height:23px;background:#e6e6e6;border-top:1px solid #b4b4b4"></div>
<div class="a" style="left:320px;top:626px;width:1px;height:23px;background:#a6a6a6"></div>
<svg class="a" style="left:6px;top:632px" width="11" height="12" viewBox="0 0 11 12"><rect x="0.5" y="0.5" width="1.8" height="11" fill="#9a9a9a"/><path d="M10.5 0.5V11.5L3 6Z" fill="#9a9a9a"/></svg>
<svg class="a" style="left:1264px;top:633px" width="12" height="10" viewBox="0 0 12 10"><path d="M0.5 0.5H11.5L6 7Z" fill="#9a9a9a"/><rect x="0.5" y="7.8" width="11" height="1.7" fill="#9a9a9a"/></svg>

</body></html>
